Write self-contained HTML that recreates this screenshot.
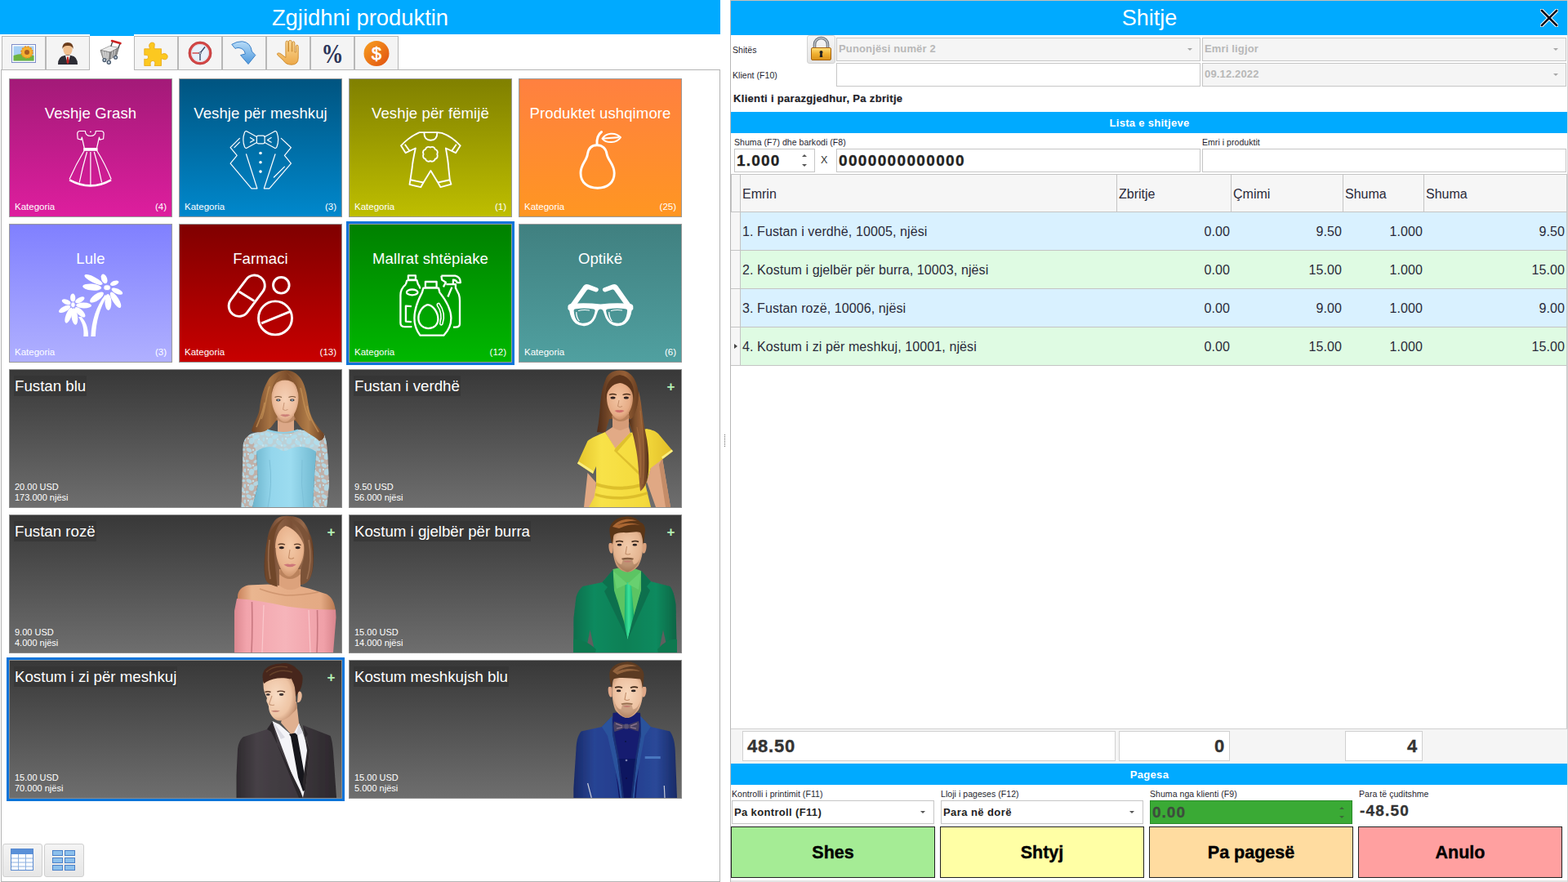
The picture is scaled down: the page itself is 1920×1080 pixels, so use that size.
<!DOCTYPE html>
<html lang="sq">
<head>
<meta charset="utf-8">
<title>Shitje</title>
<style>
*{box-sizing:border-box;margin:0;padding:0}
html,body{width:1920px;height:1080px;overflow:hidden;background:#fff}
body{position:relative;font-family:"Liberation Sans",sans-serif;font-size:11px;color:#222}
.abs{position:absolute}
/* ---------- left panel ---------- */
#lhead{left:0;top:0;width:882px;height:42px;background:#00aaff;color:#fff;text-align:center;font-size:27.4px;line-height:44px}
#lbox{left:1px;top:85px;width:881px;height:995px;border:1px solid #b4b4b4;background:#fff}
.tab{position:absolute;top:44px;width:54px;height:42px;border:1px solid #b8b8b8;background:#f4f4f4}
.tab.sel{top:42px;height:44px;width:54px;background:#fff;border:none;border-top:2px solid #00aaff}
.tab svg{position:absolute;left:10px;top:4px}
.cat{position:absolute;width:200px;height:170px;border:1px solid #9a9a9a;color:#fff}
.cat .t{position:absolute;left:0;right:0;top:31px;text-align:center;font-size:18.5px;letter-spacing:.12px;line-height:22px;white-space:nowrap}
.cat .k{position:absolute;left:6px;bottom:6px;font-size:11.5px;line-height:12px}
.cat .n{position:absolute;right:6px;bottom:6px;font-size:11.5px;line-height:12px}
.cat svg{position:absolute;left:60px;top:58px}
.prod{position:absolute;width:408px;height:170px;border:1px solid #8c8c8c;color:#fff;background:linear-gradient(#383838,#6e6e6e);overflow:hidden}
.prod .t{position:absolute;left:5px;top:7px;font-size:18.7px;line-height:25px;white-space:nowrap;background:rgba(50,50,50,.55);padding:0 1px}
.prod .p{position:absolute;left:6px;bottom:5px;font-size:11px;line-height:13px;white-space:nowrap}
.prod .plus{position:absolute;right:7.5px;top:11px;font-size:17px;line-height:20px;color:#b4f0b4;font-weight:bold}
.prod svg{position:absolute;right:0;top:0}
.selbox{position:absolute;border:3px solid #0a74da}
.vbtn{position:absolute;top:1033px;width:49px;height:41px;border:1px solid #cfcfcf;border-radius:3px;background:linear-gradient(#f4f4f4,#e6e6e6)}
/* ---------- right panel ---------- */
#rbox{left:894px;top:0;width:1026px;height:1080px;border-left:1px solid #b8b8b8;border-top:1px solid #c8c0b8}
#rhead{left:895px;top:1px;width:1025px;height:42px;background:#00aaff;color:#fff;text-align:center;font-size:27px;line-height:42px}
.lbl{position:absolute;font-size:10.5px;line-height:13px;white-space:nowrap;color:#1e1e2e;letter-spacing:.05px}
.inp{position:absolute;height:29px;border:1px solid #c6c6c6;background:#fff;white-space:nowrap;overflow:hidden}
.inp.dis{background:#f5f5f5;color:#b8b8b8;font-weight:bold;font-size:13px;letter-spacing:.15px;line-height:25px;padding-left:2px}
.arr{position:absolute;right:9px;top:12px;width:0;height:0;border-left:3.5px solid transparent;border-right:3.5px solid transparent;border-top:3.5px solid #a8a8a8}
.bar{position:absolute;left:895px;width:1025px;height:26px;background:#00aaff;color:#fff;font-weight:bold;font-size:13px;letter-spacing:.3px;line-height:28px;text-align:center}
.gh{position:absolute;top:213px;height:47px;background:#f6f6f6;border:1px solid #c4c4c4;border-left:none;font-size:16px;line-height:48px;padding-left:2px;color:#2a2a3a}
.row{position:absolute;left:895px;width:1023px;height:47px;border-bottom:1px solid #c4c4c4;font-size:16px;letter-spacing:.1px;line-height:48px;color:#2a2a3a}
.row .ind{position:absolute;left:0;top:0;width:12px;height:46px;background:#f6f6f6;border-right:1px solid #c4c4c4}
.row span{position:absolute;top:0;white-space:nowrap}
.row .r{text-align:right}
.blue{background:#d9f1ff}
.green{background:#dffbe3}
.tot{position:absolute;top:895px;height:37px;border:1px solid #d0d0d0;background:#fff;font-weight:bold;font-size:22px;letter-spacing:.8px;line-height:36px;color:#333;-webkit-text-stroke:.35px #333}
.big{position:absolute;top:1012px;width:250px;height:63px;border:1px solid #222;font-weight:bold;font-size:21.5px;line-height:62px;text-align:center;color:#000;-webkit-text-stroke:.4px #000}
</style>
</head>
<body>
<!-- LEFT -->
<div id="lhead" class="abs">Zgjidhni produktin</div>
<div id="lbox" class="abs"></div>
<!--TABS-->
<svg width="0" height="0" style="position:absolute"><defs><linearGradient id="dg" x1="0" y1="0" x2="1" y2="1"><stop offset="0" stop-color="#f8a020"/><stop offset="1" stop-color="#e05010"/></linearGradient></defs></svg>
<div class="tab" style="left:2px"><svg width="32" height="32" viewBox="0 0 32 32" style="top:4px"><rect x="1.500" y="5.500" width="29" height="22" fill="#fff" stroke="#7c8cc8"/><rect x="3.500" y="7.500" width="25" height="18" fill="#a8d0f4"/><path d="M3.500 19Q14 15 28.500 19V25.500H3.500Z" fill="#6cb440"/><circle cx="20" cy="15" r="7" fill="#f4b030"/><circle cx="20" cy="15" r="7" fill="none" stroke="#e89020" stroke-width="1.500" stroke-dasharray="2.200 1.500"/><circle cx="20" cy="15" r="3" fill="#a85c20"/></svg></div>
<div class="tab" style="left:56px"><svg width="32" height="32" viewBox="0 0 32 32" style="top:4px"><path d="M4 30Q4 20 12 19L16 18L20 19Q28 20 28 30Z" fill="#2c2c34"/><path d="M13 19L16 29L19 19Z" fill="#f4f4f4"/><path d="M15.2 20.500H16.8L17.6 27L16 29.5L14.4 27Z" fill="#c82020"/><ellipse cx="16" cy="11.5" rx="5.6" ry="7" fill="#f0c090"/><path d="M9.5 11Q9 3 16 3Q23 3 22.5 11Q21 6.5 16 7Q11 6.500 9.500 11Z" fill="#6a3c1c"/></svg></div>
<div class="tab sel" style="left:110px"><svg width="32" height="32" viewBox="0 0 32 32" style="top:4px"><path d="M3 13.500L14.400 8.300L25.500 10.300L15 16.100Z" fill="#ececec" stroke="#8a8a8a" stroke-width=".7"/><path d="M3 13.500L15 16.100L13.800 25.200L6 23.300Z" fill="#b4b4b4" stroke="#6c6c6c" stroke-width=".8"/><path d="M15 16.100L25.500 10.300L22.900 19.400L13.800 25.200Z" fill="#8e8e8e" stroke="#6c6c6c" stroke-width=".8"/><path d="M6 14.300L8 23.700M9 15L10.200 24.300M12 15.600L12.200 24.800M18 14.500L16.500 23.500M21 12.800L19.300 21.700" stroke="#e4e4e4" stroke-width=".8"/><path d="M17.800 3L15.800 8.800M26.800 5.800L25 10.500" stroke="#44464c" stroke-width="1.300"/><path d="M17 2.100L27.400 5.100" stroke="#cc2020" stroke-width="2.600" stroke-linecap="round"/><g fill="#c8d4e0" stroke="#46566a" stroke-width="1.300"><circle cx="7.900" cy="25.600" r="1.900"/><circle cx="13.300" cy="28.300" r="2.100"/><circle cx="21.600" cy="22.300" r="1.900"/></g></svg></div>
<div class="tab" style="left:164px"><svg width="32" height="32" viewBox="0 0 32 32" style="top:4px"><g transform="translate(16 17) scale(1.38) translate(-16.3 -16.5)"><path d="M6 12H11Q9 8 12 6.500Q15.500 6 15 9Q14.5 11 15 12H21V17Q25 15 26.500 18Q27 21.500 24 21.500Q22 21 21 20.500V27H15Q16.5 23 13.500 22.5Q10.500 23 11.5 27H6V21Q9 22 9.5 19.500Q9.500 17 6 17.5Z" fill="#fcc820" stroke="#e8a818" stroke-width=".6"/></g></svg></div>
<div class="tab" style="left:218px"><svg width="32" height="32" viewBox="0 0 32 32" style="top:4px"><circle cx="16" cy="16" r="12.500" fill="#fff" stroke="#d44848" stroke-width="3.200"/><circle cx="16" cy="16" r="10.500" fill="#e8f0fa" stroke="#c8ccd4" stroke-width=".6"/><circle cx="16" cy="16" r="14" fill="none" stroke="#b83030" stroke-width=".7"/><path d="M16 16L22 8.500M16 16V25" stroke="#3c4a68" stroke-width="1.400" fill="none"/><path d="M16 16H6.500" stroke="#d03030" stroke-width="1.300"/><circle cx="16" cy="16" r="1.300" fill="#fff" stroke="#3c4a68" stroke-width=".8"/></svg></div>
<div class="tab" style="left:272px"><svg width="32" height="32" viewBox="0 0 32 32" style="top:4px"><defs><linearGradient id="ag" x1="0" y1="0" x2="0" y2="1"><stop offset="0" stop-color="#b8dcf8"/><stop offset="1" stop-color="#4e98dc"/></linearGradient></defs><path d="M.8 5.400Q7 1.500 13.700 1.750Q24 3 25.400 14L29.800 18.500L21 29.500L11.500 18.500L17.400 17Q16 10 9 9.500Q6.500 9.500 5 10.500Z" fill="url(#ag)" stroke="#3a80c8" stroke-width="1" stroke-linejoin="round"/></svg></div>
<div class="tab" style="left:326px"><svg width="32" height="32" viewBox="0 0 32 32" style="top:4px"><defs><linearGradient id="hg" x1="0" y1="0" x2="0" y2="1"><stop offset="0" stop-color="#fcdc9c"/><stop offset="1" stop-color="#eca848"/></linearGradient></defs><path d="M12.900 17V3.500Q12.900 1 14.400 1Q15.900 1 15.900 3.500V14H16.500V2.500Q16.500 .3 18.300 .3Q20.200 .3 20.200 2.500V14H20.900V4Q20.900 1.750 22.400 1.750Q23.900 1.750 23.900 4V15H25.300V8.500Q25.300 6.100 26.800 6.100Q28.200 6.100 28.200 8.500V22Q28.200 30.200 20 30.200Q13 30.200 10 25L3 18.500Q1.500 16.500 3.500 16Q5.500 15.800 7 17L12.900 21.500Z" fill="url(#hg)" stroke="#cc8828" stroke-width=".9" stroke-linejoin="round"/></svg></div>
<div class="tab" style="left:380px"><svg width="32" height="32" viewBox="0 0 32 32" style="top:4px"><text x="16" y="27.500" font-family="Liberation Serif,serif" font-weight="bold" font-size="33" text-anchor="middle" fill="#2c3458" textLength="27" lengthAdjust="spacingAndGlyphs">%</text></svg></div>
<div class="tab" style="left:434px"><svg width="32" height="32" viewBox="0 0 32 32" style="top:4px"><circle cx="16" cy="16.500" r="15.500" fill="url(#dg)"/><text x="16" y="24" font-family="Liberation Sans,sans-serif" font-size="21.500" text-anchor="middle" fill="#fff" stroke="#fff" stroke-width=".7">$</text></svg></div>
<!--/TABS-->
<!--CATS-->
<div class="cat" style="left:11px;top:96px;background:linear-gradient(#a31a78,#de1e9e)"><div class="t">Veshje Grash</div><svg width="80" height="80" viewBox="0 0 80 80" style="overflow:visible"><g fill="none" stroke="#fff" stroke-width="1.200" stroke-linejoin="round"><path d="M32.400 5.500H26Q22.700 5.500 22.700 9L23.200 15L27.600 16.200L28.300 13L31.300 26.500H46.500L49.500 13L50.200 16.200L54.600 15L55.100 9Q55.100 5.500 51.800 5.500H45.300Q45.300 11.500 38.900 11.500Q32.400 11.500 32.400 5.500Z"/><rect x="30.800" y="26.500" width="16.200" height="2.700" fill="#fff"/><path d="M31.300 29.200Q21 46 13 64.500M46.500 29.200Q57 46 64.200 64.500M34.500 31Q29 50 25.200 68.500M38.900 31V71M43.300 31Q49 50 52.600 68.500"/><path d="M13.200 65.300Q38.900 79.500 64 65.300" stroke-width="2.600"/><circle cx="38.900" cy="6.300" r=".9" fill="#fff" stroke="none"/></g></svg><div class="k">Kategoria</div><div class="n">(4)</div></div>
<div class="cat" style="left:219px;top:96px;background:linear-gradient(#005480,#0088cc)"><div class="t">Veshje për meshkuj</div><svg width="80" height="80" viewBox="0 0 80 80" style="overflow:visible"><g fill="none" stroke="#fff" stroke-width="1.200" stroke-linejoin="round" stroke-linecap="round"><rect x="34.400" y="11.200" width="9.700" height="9.600" rx="1.800"/><path d="M34.400 12.500L22.500 5.900Q20.300 5 19.500 7.200Q16.200 16 19.500 24.800Q20.300 27 22.500 26.100L34.400 19.500M44.100 12.500L56 5.900Q58.200 5 59 7.200Q62.300 16 59 24.800Q58.200 27 56 26.100L44.100 19.500M26.400 13.600L31.200 16.400L26.400 19.200M52.200 13.600L47.400 16.400L52.200 19.200"/><path d="M13.400 14.400L2.100 25.700L10.200 35.400L2.100 45.100L28 75.800H34.900L21.500 33.800M7 25.700L13.400 19.200"/><path d="M64.300 14.400L76.400 25.700L68.400 35.400L76.400 45.100L49.800 75.800H43.300L57 33.800M55.400 62L68.400 49.100"/><g fill="#fff" stroke="none"><circle cx="39" cy="32.500" r="1.800"/><circle cx="39" cy="43.800" r="1.800"/><circle cx="39" cy="55.100" r="1.800"/></g></g></svg><div class="k">Kategoria</div><div class="n">(3)</div></div>
<div class="cat" style="left:427px;top:96px;background:linear-gradient(#808000,#bebe00)"><div class="t">Veshje për fëmijë</div><svg width="80" height="80" viewBox="0 0 80 80" style="overflow:visible"><g fill="none" stroke="#fff" stroke-width="1.900" stroke-linejoin="round"><path d="M31.300 7.100H25.600Q14 12 3 23.300L8.700 32.200L20.800 26.500Q17 44 16.700 50L14.300 66.100L13.500 70.900L27.200 74.200L30.500 68.500L39.400 54L48.200 68.500L51.500 74.200L64.400 70.600L62.800 65.300L61.200 50Q61 44 57.900 26.500L70 32.200L75.700 23.300Q65 12 53.100 7.900L47.400 7.100Z"/><path d="M31.300 7.100Q31.300 16.800 39.400 16.800Q47.400 16.800 47.400 7.100M7.800 21.700L13.500 29.700M70.800 21.700L65.200 29.700M14.800 65.300L30.500 68.500M62.800 65.300L48.200 68.500"/><path d="M38.9 25.5A3.9 3.9 0 0 1 44.8 27.9A3.9 3.9 0 0 1 47.2 33.8A3.9 3.9 0 0 1 44.8 39.7A3.9 3.9 0 0 1 38.9 42.1A3.9 3.9 0 0 1 33.0 39.7A3.9 3.9 0 0 1 30.6 33.8A3.9 3.9 0 0 1 33.0 27.9A3.9 3.9 0 0 1 38.9 25.5Z"/></g></svg><div class="k">Kategoria</div><div class="n">(1)</div></div>
<div class="cat" style="left:635px;top:96px;background:linear-gradient(#ff8040,#ff9622)"><div class="t">Produktet ushqimore</div><svg width="80" height="80" viewBox="0 0 80 80" style="overflow:visible"><g fill="none" stroke="#fff" stroke-width="2.900" stroke-linejoin="round" stroke-linecap="round"><path d="M35 22.700C28.500 22.700 24.500 27 23.500 33.500C22.500 42 15 46 15 57C15 68.500 23.500 75.300 35.700 75.300C48 75.300 56.200 68.500 56.200 57C56.200 46 48.500 42 47 33.500C46 27 41.500 22.700 35 22.700Z"/><path d="M35 22C34.500 15 36.500 9.500 40.600 6.500"/><path d="M41.500 14.800C45.500 8 57 6 64 13.200C59 20.500 47 21 41.500 14.800ZM43.500 14.500L61 13.300" stroke-width="2"/></g></svg><div class="k">Kategoria</div><div class="n">(25)</div></div>
<div class="cat" style="left:11px;top:274px;background:linear-gradient(#8080ff,#b0b0ff)"><div class="t">Lule</div><svg width="80" height="80" viewBox="0 0 80 80" style="overflow:visible"><g fill="#fff" stroke="none"><ellipse cx="42.5" cy="9.5" rx="12.3" ry="3.5" transform="rotate(-153 42.5 9.5)"/><ellipse cx="55.6" cy="8.4" rx="6.1" ry="3.5" transform="rotate(-111 55.6 8.4)"/><ellipse cx="68.2" cy="13.7" rx="5.5" ry="2.8" transform="rotate(-22 68.2 13.7)"/><ellipse cx="71.4" cy="23.6" rx="7.4" ry="3.1" transform="rotate(25 71.4 23.6)"/><ellipse cx="69.6" cy="34.3" rx="11.2" ry="3.8" transform="rotate(58 69.6 34.3)"/><ellipse cx="60.4" cy="37.0" rx="10.0" ry="4.0" transform="rotate(88 60.4 37.0)"/><ellipse cx="46.5" cy="31.0" rx="9.9" ry="4.0" transform="rotate(145 46.5 31.0)"/><ellipse cx="40.7" cy="18.6" rx="11.6" ry="4.0" transform="rotate(-175 40.7 18.6)"/><ellipse cx="59.1" cy="19.2" rx="4.2" ry="3.400" stroke="#9a9aff" stroke-width=".8"/><ellipse cx="17.2" cy="31.6" rx="5.1" ry="3.1" transform="rotate(-92 17.2 31.6)"/><ellipse cx="25.8" cy="34.3" rx="6.3" ry="3.0" transform="rotate(-29 25.8 34.3)"/><ellipse cx="30.6" cy="41.0" rx="9.5" ry="3.5" transform="rotate(1 30.6 41.0)"/><ellipse cx="26.0" cy="49.3" rx="8.3" ry="3.5" transform="rotate(44 26.0 49.3)"/><ellipse cx="19.3" cy="54.5" rx="10.3" ry="3.8" transform="rotate(83 19.3 54.5)"/><ellipse cx="12.2" cy="53.2" rx="10.0" ry="3.5" transform="rotate(111 12.2 53.2)"/><ellipse cx="7.1" cy="45.4" rx="7.9" ry="3.2" transform="rotate(153 7.1 45.4)"/><ellipse cx="9.2" cy="36.7" rx="5.8" ry="3.0" transform="rotate(-157 9.2 36.7)"/><ellipse cx="17.4" cy="40.2" rx="2.800" ry="3.400" stroke="#9a9aff" stroke-width=".8"/><path d="M56.7 28.1C46.2 41.8 40.0 59.6 39.4 79.0H44.9C45.5 61.2 50.2 43.5 59.1 29.7Z"/><path d="M23.9 55.1C29.7 62.9 31.0 70.9 30.3 79.0H36.1C36.1 69.3 33.6 61.2 27.7 55.1Z"/></g></svg><div class="k">Kategoria</div><div class="n">(3)</div></div>
<div class="cat" style="left:219px;top:274px;background:linear-gradient(#800000,#c80000)"><div class="t">Farmaci</div><svg width="80" height="80" viewBox="0 0 80 80" style="overflow:visible"><g fill="none" stroke="#fff" stroke-width="2.900"><rect x="9.600" y=".9" width="25.200" height="56.600" rx="12.600" transform="rotate(37 22.200 29.200)"/><path d="M12.600 24L31.200 35.400"/><circle cx="64.300" cy="16.300" r="9.800"/><circle cx="57" cy="56.400" r="20.500"/><path d="M40.100 62.900L75.600 48.300"/></g></svg><div class="k">Kategoria</div><div class="n">(13)</div></div>
<div class="cat" style="left:427px;top:274px;background:linear-gradient(#008000,#00b800)"><div class="t">Mallrat shtëpiake</div><svg width="80" height="80" viewBox="0 0 80 80" style="overflow:visible"><g transform="translate(-1.600 -1.400)" fill="none" stroke="#fff" stroke-width="2.300" stroke-linejoin="round"><path d="M13.500 5.800H22.500V11H13.500ZM12 11.500H24L25.500 16.500Q28 19.500 28 22M10.500 16.500Q4 22 4 30V64Q4 68.500 9 68.500H18M12 11.500L10.500 16.500M17.500 43.500L10.500 43V62L17.500 62.500"/><ellipse cx="18.300" cy="26.300" rx="6.800" ry="3.400"/><path d="M34.500 13.400H48.200V20.500H34.500ZM32 21H50.600L52 26.500Q66 44 66 58Q66 70 57 79H28Q21 70 21 58Q21 44 30.500 26.500Z"/><path d="M37 41.500C30 44 25.500 52 26 59C26.500 66 32 70.500 38 70.500C45 70.500 50 66 50 59C50 51 44 42 37 41.500Z"/><path d="M51.500 40Q60 52 55.500 65Q54.500 67 53 66Q52 65 52.500 63.500Q56 52 49 42.500Q48.500 40.500 50 40Q51 39.500 51.500 40Z" stroke-width="1.600"/><path d="M54 6.100H71Q77.500 7.500 77.500 14.500H73.500Q72 11 68.500 11V16.500M54 6.100L54.700 11L59.500 14.200L56.500 19.800M60 16.500H71.500V21L75.500 29Q76.600 32 76.600 37V65Q76.600 69.100 71 69.100H68.500M67 20L62 31.900"/></g></svg><div class="k">Kategoria</div><div class="n">(12)</div></div>
<div class="cat" style="left:635px;top:274px;background:linear-gradient(#408080,#50a0a0)"><div class="t">Optikë</div><svg width="80" height="80" viewBox="0 0 80 80" style="overflow:visible"><g fill="#fff" stroke="none"><path d="M2.600 39.400L18.500 17Q21 14 25 15.500L35.500 19.500Q37.500 20.500 36.500 22.800Q35.500 25 33.500 24.500L25 21.500Q23.500 21 22.500 22.500L10.700 39ZM76.100 39.400L60.200 17Q57.700 14 53.700 15.500L43.200 19.500Q41.200 20.500 42.200 22.800Q43.200 25 45.200 24.500L53.700 21.500Q55.200 21 56.200 22.500L68 39Z"/><path fill-rule="evenodd" d="M-.6 42.500Q-.6 39.500 3 39Q21 37.500 39.400 39.500Q58 37.500 75.800 39Q79.300 39.500 79.300 42.500V45.500L77.500 47.500Q76 58 70 63Q65 66.500 59 66.200Q50 65.500 45.500 56Q43.500 50 42.500 47.500Q41.500 45.500 39.400 45.500Q37.300 45.500 36.300 47.500Q35.300 50 33.300 56Q28.800 65.500 19.800 66.200Q13.800 66.500 8.800 63Q2.800 58 1.200 47.500L-.6 45.500ZM6.600 47Q6.500 45.500 9 45.200Q20 43.800 31 45.500Q33 46 32.600 48Q31.500 55 27.500 59.500Q23 63 17 62.800Q10 62 8 55Q6.800 51 6.600 47ZM72.100 47Q72.200 45.500 69.700 45.200Q58.700 43.800 47.700 45.500Q45.700 46 46.100 48Q47.200 55 51.200 59.500Q55.700 63 61.700 62.800Q68.700 62 70.700 55Q71.900 51 72.100 47Z"/><path d="M10.300 49Q10.500 56 14 60L12.800 60.200Q8.800 56 9.200 49ZM50.300 49Q50.500 56 54 60L52.800 60.200Q48.800 56 49.200 49ZM12 47.900Q19 46.200 26 47.400L26 46.500Q19 45.300 12 46.900ZM52 47.900Q59 46.200 66 47.400L66 46.500Q59 45.300 52 46.900Z"/></g></svg><div class="k">Kategoria</div><div class="n">(6)</div></div>
<div class="selbox" style="left:424px;top:271px;width:206px;height:176px"></div>
<!--/CATS-->
<!--PRODS-->
<div class="prod" style="left:11px;top:452px"><svg width="140" height="168" viewBox="0 0 140 168"><defs>
<linearGradient id="h1" x1="0" y1="0" x2="1" y2="0"><stop offset="0" stop-color="#6e4426"/><stop offset=".25" stop-color="#a87444"/><stop offset=".5" stop-color="#7a4c2a"/><stop offset=".78" stop-color="#b07c48"/><stop offset="1" stop-color="#6a4024"/></linearGradient>
<radialGradient id="s1" cx=".5" cy=".45" r=".6"><stop offset="0" stop-color="#f6d2b8"/><stop offset=".7" stop-color="#ecbc9c"/><stop offset="1" stop-color="#c8906c"/></radialGradient>
<linearGradient id="d1" x1="0" y1="0" x2="1" y2="0"><stop offset="0" stop-color="#6cb4cc"/><stop offset=".3" stop-color="#94d6ec"/><stop offset=".6" stop-color="#9cdcf0"/><stop offset="1" stop-color="#70b8d0"/></linearGradient>
<pattern id="lace" width="23" height="19" patternUnits="userSpaceOnUse"><g fill="#b0e0f0"><ellipse cx="4" cy="3" rx="3.600" ry="2.200" transform="rotate(30 4 3)"/><ellipse cx="13" cy="6" rx="4" ry="2.400" transform="rotate(-25 13 6)"/><ellipse cx="20" cy="2.500" rx="2.400" ry="1.600"/><ellipse cx="7" cy="11" rx="3.200" ry="4" transform="rotate(15 7 11)"/><ellipse cx="17.500" cy="13" rx="3.800" ry="2.600" transform="rotate(40 17.500 13)"/><ellipse cx="1.500" cy="16.500" rx="2.200" ry="1.800"/><ellipse cx="12" cy="17" rx="2.800" ry="1.700" transform="rotate(-30 12 17)"/><ellipse cx="22" cy="9" rx="1.600" ry="2.400"/></g><g fill="#c8ecf8"><circle cx="9" cy="3" r="1.200"/><circle cx="16" cy="9" r="1.100"/><circle cx="3" cy="8" r="1.200"/><circle cx="21" cy="16.500" r="1.300"/></g></pattern>
<filter id="soft" x="-5%" y="-5%" width="110%" height="110%"><feGaussianBlur stdDeviation=".55"/></filter></defs>
<g filter="url(#soft)">
<path d="M30 78C22 82 19.500 88 19.500 96L18.500 140L17.500 168H31L38 140L36 100L40 86ZM118 78C122 84 123 96 123.500 109L125 140L122 168H105L107 130L109 100L104 84Z" fill="#c0b0a8"/>
<path d="M30 78C22 82 19.500 88 19.500 96L18.500 140L17.500 168H31L38 140L36 100L40 86ZM118 78C122 84 123 96 123.500 109L125 140L122 168H105L107 130L109 100L104 84Z" fill="url(#lace)" opacity=".8"/>
<path d="M30 78L49 73Q70 80 87 73L118 78L109 102H36Z" fill="#bcd0d6"/>
<path d="M30 78L49 73Q70 80 87 73L118 78L109 102H36Z" fill="url(#lace)" opacity=".8"/>
<path d="M36 100C44 93 56 92 64 97C68 100 72 100 76 97C86 92 100 93 109 100L107 130L105 168H31L38 140Z" fill="url(#d1)"/>
<path d="M52 110Q56 140 50 168M92 110Q90 140 94 168" stroke="#7cc0d8" stroke-width="1" fill="none"/>
<path d="M71 .5C60 1 52 8 49 15C44 24 41 36 40 46C39 56 34 62 31 71C29 75 31 77 34 76C40 77 48 76 54 70L60 62H84L90 70C98 78 106 80 113 87C118 86 120 82 118.500 78C113 72 106 64 103 56C99 46 99 34 96 24C93 10 84 0 71 .5Z" fill="url(#h1)"/>
<path d="M52 20C47 34 47 50 42 60M90 22C94 36 94 50 102 62M46 40C44 52 40 60 36 70M98 44C100 56 106 66 112 76" stroke="#c89458" stroke-width="1.600" fill="none" opacity=".7"/>
<path d="M62 52H82V77Q72 80 62 77Z" fill="#dca888"/>
<path d="M60 60Q72 70 84 60L82 56H62Z" fill="#b88462" opacity=".8"/>
<path d="M49 73.500Q70 80.500 87 73.500" stroke="#8ecfe6" stroke-width="2.200" fill="none"/>
<path d="M54.500 34C54.500 20 60 12.500 71 12.500C82 12.500 87.500 20 87.500 34C87.500 46 82 57 75.500 62C72.500 64.200 69.500 64.200 66.500 62C60 57 54.500 46 54.500 34Z" fill="url(#s1)"/>
<path d="M71 2C64 8 57 16 54.500 30C54 20 60 8 71 2ZM71 2C78 8 85 16 87.500 30C88.500 18 82 8 71 2Z" fill="#8a5a34"/>
<path d="M58.500 33.500Q62.500 31.500 67 33.500M75.500 33.500Q80 31.500 84 33.500" stroke="#7a5436" stroke-width="1.100" fill="none"/>
<ellipse cx="62.800" cy="37" rx="2.800" ry="1.400" fill="#4a4448"/><ellipse cx="79.800" cy="37" rx="2.800" ry="1.400" fill="#4a4448"/>
<circle cx="62.800" cy="37" r=".9" fill="#88b0c8"/><circle cx="79.800" cy="37" r=".9" fill="#88b0c8"/>
<path d="M70 40L68.500 48.500Q71.500 50.500 74.500 48.500" stroke="#c89474" stroke-width="1" fill="none"/>
<path d="M65 55.300Q68.500 53.600 71.300 54.600Q74 53.600 77.500 55.300Q71.300 59.500 65 55.300Z" fill="#cc8078"/>
</g></svg><div class="t">Fustan blu</div><div class="p">20.00 USD<br>173.000 njësi</div></div>
<div class="prod" style="left:427px;top:452px"><svg width="140" height="168" viewBox="0 0 140 168"><defs>
<linearGradient id="h2" x1="0" y1="0" x2="1" y2="0"><stop offset="0" stop-color="#4e2c18"/><stop offset=".3" stop-color="#7c4e2c"/><stop offset=".6" stop-color="#965f36"/><stop offset="1" stop-color="#56321a"/></linearGradient>
<radialGradient id="s2" cx=".45" cy=".45" r=".62"><stop offset="0" stop-color="#f2c4a2"/><stop offset=".7" stop-color="#e6ac86"/><stop offset="1" stop-color="#bf8258"/></radialGradient>
<linearGradient id="d2" x1="0" y1="0" x2="1" y2="0"><stop offset="0" stop-color="#e4c42c"/><stop offset=".25" stop-color="#f8e248"/><stop offset=".7" stop-color="#f4da3c"/><stop offset="1" stop-color="#e0bc28"/></linearGradient></defs>
<g filter="url(#soft)">
<path d="M65 .5C55 .5 49 6 47.500 12C43 22 42 32 41 42C40 56 39 66 37 76L47 77L52 60H80L82 66L92 72C94 92 96 120 92 147L89 148C90 120 86 92 76 64L92 60C92 46 90 36 88 28C86 14 80 .5 65 .5Z" fill="url(#h2)"/>
<path d="M25.500 126L21 168H33.500L36 138ZM117 108L127 168H109L98 137L103 119Z" fill="#e0a884"/>
<path d="M117 108L127 168H121L113 116Z" fill="#c48c68"/>
<path d="M56 52H76V82H56Z" fill="#d69c78"/>
<path d="M47 76L56 70Q62 74 66 74L76 70L78 77L60 98Z" fill="#e2aa86"/>
<path d="M55 58Q66 68 77 58L76 54H56Z" fill="#b47c56" opacity=".85"/>
<path d="M47 76C38 80 30 83 25.500 87L13 114.500L32 127L36 118L36 141L33.500 156L27 168H103L96.500 141L103 120L117.500 109L130 99.500L112 78C108 74 102 73 98 72L77.500 77L59.500 96Z" fill="url(#d2)"/>
<path d="M59.500 96L77.500 77L80 79L62 100L96.500 132L96 136L58 99Z" fill="#d8b828" opacity=".8"/>
<path d="M36 138Q66 148 97 137L97 141Q66 152 36 142ZM35 151Q66 160 99 149L99.500 152Q66 164 34.500 154Z" fill="#d4b424" opacity=".75"/>
<path d="M13 114.500L32 127L33 124L14.500 112ZM117.500 109L130 99.500L128.500 97.500L116 106.500Z" fill="#fbee80"/>
<path d="M88 26C92 40 92 56 96.500 77C100 92 101 110 100 125C99 136 96 144 90 148.500C88 130 88 110 84 93C82 80 78 70 76 62C84 58 88 44 88 26Z" fill="url(#h2)"/>
<path d="M90 50C94 80 96 110 93 140M86 70C90 90 91 110 90 132" stroke="#a87040" stroke-width="1.200" fill="none" opacity=".7"/>
<path d="M49 34C49 21 54 15.500 65 15.500C76 15.500 81 21 81 34C81 45 76 54.500 70 59C66.500 61.500 63.500 61.500 60 59C54 54.500 49 45 49 34Z" fill="url(#s2)"/>
<path d="M47.500 36C46 20 52 8 65 6C78 8 84 20 82 36C81 24 74 17 65 16C56 17 49 24 47.500 36Z" fill="#5c361c"/>
<path d="M52 30.500Q56 28.500 61 30.500M68.500 30.500Q73.500 28.500 78 30.500" stroke="#4a2c18" stroke-width="1.300" fill="none"/>
<ellipse cx="56.500" cy="34" rx="3" ry="1.500" fill="#2e2220"/><ellipse cx="72.800" cy="34" rx="3" ry="1.500" fill="#2e2220"/>
<path d="M64 37L62.500 44.500Q65 46.500 68 44.500" stroke="#c28c68" stroke-width="1" fill="none"/>
<path d="M58.500 50Q62 48.300 64.600 49.300Q67 48.300 70.500 50Q64.600 54.500 58.500 50Z" fill="#d0706c"/>
</g></svg><div class="t">Fustan i verdhë</div><div class="plus">+</div><div class="p">9.50 USD<br>56.000 njësi</div></div>
<div class="prod" style="left:11px;top:630px"><svg width="140" height="168" viewBox="0 0 140 168"><defs>
<linearGradient id="h3" x1="0" y1="0" x2="1" y2="0"><stop offset="0" stop-color="#5e3a24"/><stop offset=".3" stop-color="#8c6044"/><stop offset=".55" stop-color="#7a5036"/><stop offset=".8" stop-color="#966a4c"/><stop offset="1" stop-color="#60391f"/></linearGradient>
<radialGradient id="s3" cx=".5" cy=".4" r=".65"><stop offset="0" stop-color="#f4caa8"/><stop offset=".7" stop-color="#e8b28c"/><stop offset="1" stop-color="#c48a62"/></radialGradient>
<linearGradient id="k3" x1="0" y1="0" x2="1" y2="0"><stop offset="0" stop-color="#c88058"/><stop offset=".15" stop-color="#eab690"/><stop offset=".5" stop-color="#e6ae88"/><stop offset=".85" stop-color="#e4aa84"/><stop offset="1" stop-color="#b87850"/></linearGradient>
<linearGradient id="d3" x1="0" y1="0" x2="1" y2="0"><stop offset="0" stop-color="#dc8890"/><stop offset=".12" stop-color="#f2a4ac"/><stop offset=".5" stop-color="#f6b4ba"/><stop offset=".88" stop-color="#f0a0a8"/><stop offset="1" stop-color="#d8848c"/></linearGradient></defs>
<g filter="url(#soft)">
<path d="M73 .8C64 .8 60 4 57 8.500C52 16 50 24 49 31C47 42 45.500 52 45.500 62C45.500 70 46 76 48 80L62 87L90 85C96 84 100 81 102 76C106 68 106 58 106 46C106 36 104 28 101 22C98 12 92 5 88 3.500C84 1.500 78 .8 73 .8Z" fill="url(#h3)"/>
<path d="M64 66H90V96H64Z" fill="#dca27c"/>
<path d="M64 72Q77 84 90 72L89 66H65Z" fill="#b47c56" opacity=".85"/>
<path d="M13 100C13 92 18 87.500 26 85.500L50 84.500L64 86Q77 96 90 87L100 89.500L122 96.500C128 100 131 106 132 112L133 118H12Z" fill="url(#k3)"/>
<path d="M40 90Q56 96 72 98Q92 98 112 94" stroke="#c48a64" stroke-width="1.400" fill="none" opacity=".7"/>
<path d="M12 102Q40 104 73 111.500Q104 116 133 115.500L133.500 125L130 168H9L9 117Z" fill="url(#d3)"/>
<path d="M30.500 106C31 126 31 148 30 168M110.500 116C111 136 111 150 110 168" stroke="#c87880" stroke-width="1.600" fill="none"/>
<path d="M45 110L43 168M100 116L102 168" stroke="#fac8cc" stroke-width="1.200" fill="none"/>
<path d="M59 40C59 26 64 17 71.500 13C80 15 90 24 94 36C95 46 93 54 90 60C86 68 82 73 78.500 74.500C76 75.500 74 75 72 73.500C66 69 59.500 54 59.500 40Z" fill="url(#s3)"/>
<path d="M71.300 3C64 8 58 18 57.500 32C57 46 58.500 60 60 72C60.500 80 61 85 62 87.500C56 86 50 84 48 80C46 72 46 60 47 48C48 30 54 10 71.300 3Z" fill="#70462c"/>
<path d="M71.300 3C80 6 90 16 94 30C96 42 95 52 91.500 62C90 70 89.500 78 90 85C96 84 100 81 102 76C106 66 106 52 104 40C102 22 90 4 71.300 3Z" fill="#7c5238"/>
<path d="M52 30C50 46 50 62 53 78M100 30C103 46 103 62 98 78" stroke="#a87c5c" stroke-width="1.600" fill="none" opacity=".7"/>
<path d="M62.500 36Q66.500 34 71 36M82 36Q86.500 34 90.500 36.500" stroke="#5a3a26" stroke-width="1.300" fill="none"/>
<ellipse cx="66.800" cy="39.600" rx="3" ry="1.600" fill="#2c2224"/><ellipse cx="86.600" cy="39.600" rx="3" ry="1.600" fill="#2c2224"/>
<path d="M77 42L75.500 52Q78.500 54.500 82 52" stroke="#c48c66" stroke-width="1.100" fill="none"/>
<path d="M69.500 60.500Q74 59 77 60Q80 59 84.800 60.500Q77 66 69.500 60.500Z" fill="#cc7478"/>
</g></svg><div class="t">Fustan rozë</div><div class="plus">+</div><div class="p">9.00 USD<br>4.000 njësi</div></div>
<div class="prod" style="left:427px;top:630px"><svg width="140" height="168" viewBox="0 0 140 168"><defs>
<radialGradient id="s4" cx=".5" cy=".42" r=".62"><stop offset="0" stop-color="#f2ccac"/><stop offset=".7" stop-color="#e4b490"/><stop offset="1" stop-color="#b88460"/></radialGradient>
<linearGradient id="j4" x1="0" y1="0" x2="1" y2="0"><stop offset="0" stop-color="#0a6e4c"/><stop offset=".2" stop-color="#0e8a5e"/><stop offset=".5" stop-color="#0c8056"/><stop offset=".8" stop-color="#0e8a5e"/><stop offset="1" stop-color="#086444"/></linearGradient>
<linearGradient id="t4" x1="0" y1="0" x2="1" y2="0"><stop offset="0" stop-color="#14a868"/><stop offset=".45" stop-color="#3ce49c"/><stop offset="1" stop-color="#12a060"/></linearGradient></defs>
<g filter="url(#soft)">
<path d="M56.500 66L74.500 62L91 68L94 100L78 152H70L54 100Z" fill="#5cc464"/>
<path d="M60 72L64 130L72 150L62 100Z" fill="#4aa850" opacity=".6"/>
<path d="M71.500 84L74.500 82L79 84.500L82.500 126L74.500 152L70.500 141L71 110Z" fill="url(#t4)"/>
<path d="M56.500 68L61 90L74.500 84L56.500 68ZM91 69L88 91L74.500 84Z" fill="#68d070"/>
<path d="M52.500 34C51 34 51 40 52.500 44C53.500 47 55 47 56 46L56 34ZM96.500 34C98 34 98 40 96.500 44C95.500 47 94 47 93 46L93 34Z" fill="#d8a07c"/>
<path d="M56 36C56 26 58 20 62 18L88 17C92 20 93.500 26 93.500 36C93.500 46 91 56 87.500 62C82 68 78 69.500 74.500 69.500C71 69.500 66 68 61 62C58 56 56 46 56 36Z" fill="url(#s4)"/>
<path d="M58 48C60 58 64 66 74.500 69.500C85 66 89 58 91.500 48C90 56 86 60 82 60L80 54Q74.500 52 69 54L67 60C63 60 60 56 58 48Z" fill="#6a4830" opacity=".32"/>
<path d="M52.500 16C54 8 62 2 72.500 1.400C80 1 86 4 90 8.500C95 10 97 16 95.500 22C95 28 94.500 32 93.500 36C93 28 92 24 90 21C84 19 78 22 70 21C64 21 60 22 57.500 24C56.500 28 56.500 32 56 36C54 30 52 22 52.500 16Z" fill="#5a3418"/>
<path d="M56 14C62 6 74 2 86 7C78 6 70 8 62 12C68 10 80 8 90 12C82 10 72 12 64 16Z" fill="#b87038" opacity=".85"/>
<path d="M60 32.500Q64.500 30.500 69 32.500M79.500 32.500Q84 30.500 88 32.500" stroke="#3e2616" stroke-width="1.700" fill="none"/>
<ellipse cx="64.500" cy="36.200" rx="2.800" ry="1.400" fill="#2a2020"/><ellipse cx="83.300" cy="36.200" rx="2.800" ry="1.400" fill="#2a2020"/>
<path d="M73.500 38L72 47Q74.500 49 78 47" stroke="#c08c68" stroke-width="1.100" fill="none"/>
<path d="M67 52.800Q74.500 50.500 82 52.800L81 54.500Q74.500 53 68 54.500Z" fill="#6a4428" opacity=".8"/>
<path d="M69 56Q74.500 55 80 56Q74.500 59 69 56Z" fill="#c47c70"/>
<path d="M56.500 67L43.500 82L19.500 87C14 92 11.500 98 11 104L8.500 125L8 168H135L134.500 156L133.500 109C132 98 130 92 126.500 87L103 81L91 68L92 90L74.500 152.500L56 90Z" fill="url(#j4)"/>
<path d="M56.500 67L43.500 82L50 88L46 93L74.500 152.500L70 130L58 92ZM91 68L103 81L98 87L102 92L74.500 152.500L80 130L91 92Z" fill="#09704e"/>
<path d="M28.500 140L33.500 163L25 158ZM118 140L113.500 163L122 158Z" fill="#5e5e5e"/>
<path d="M8 152Q20 150 36 164L35 168H8ZM135 152Q124 150 111 164L112 168H135Z" fill="#0a7850"/>
</g></svg><div class="t">Kostum i gjelbër për burra</div><div class="plus">+</div><div class="p">15.00 USD<br>14.000 njësi</div></div>
<div class="prod" style="left:11px;top:808px"><svg width="140" height="168" viewBox="0 0 140 168"><defs>
<radialGradient id="s5" cx=".4" cy=".45" r=".65"><stop offset="0" stop-color="#f8dcc4"/><stop offset=".7" stop-color="#eec4a4"/><stop offset="1" stop-color="#c49070"/></radialGradient>
<linearGradient id="j5" x1="0" y1="0" x2="1" y2="0"><stop offset="0" stop-color="#2e2a2e"/><stop offset=".2" stop-color="#464046"/><stop offset=".6" stop-color="#3e383e"/><stop offset="1" stop-color="#2c282c"/></linearGradient></defs>
<g filter="url(#soft)">
<path d="M70 58L85 50L88 76L92 88L80 92L66 76Z" fill="#e0b090"/>
<path d="M70 62Q78 70 86 58L85 52L70 58Z" fill="#b88868" opacity=".8"/>
<path d="M87 38C90 36 92.500 40 91.500 45C90.500 50 88 52 86 51Z" fill="#e8b898"/>
<path d="M44.500 30C44 24 46 22 48 20L78 18C82 24 84 34 84 42C85 50 84 58 82 62C78 68 72 72 66 73.500C62 74 58 72 55 68C52 64 51 60 51 56L49.500 52C48 50 48 48 49 46C46 40 44.500 36 44.500 30Z" fill="url(#s5)"/>
<path d="M43.500 18C44 10 52 4 65 3.700C72 2 80 4 85.500 10C90 13 93 18 92.600 22C92.500 28 91 32 90 35C88 38 86 40 84 44C84 36 83 30 80.500 26C79 22 78 21 77.600 22.600C68 20 56 21 48 26C46.500 27 45.500 28 45.300 28C44 26 43.500 22 43.500 18Z" fill="#46281a"/>
<path d="M48 14C54 8 64 6 74 8M52 18C60 12 70 11 80 14" stroke="#6e4630" stroke-width="1.400" fill="none" opacity=".8"/>
<path d="M46.500 38.500Q50 37 53.500 38.500M61.500 38Q66 36 71 38.500" stroke="#5a3826" stroke-width="1.400" fill="none"/>
<ellipse cx="50.200" cy="41.500" rx="2.400" ry="1.300" fill="#3a3030"/><ellipse cx="66.600" cy="41.500" rx="2.800" ry="1.400" fill="#3a3030"/>
<path d="M55 43L51.500 53Q54 55.500 58 54" stroke="#c89878" stroke-width="1.100" fill="none"/>
<path d="M54 61.500Q59 60 65 61.500Q59 64.500 54 61.500Z" fill="#c88878"/>
<path d="M55.500 74L64 78L80 92L88 77L92.500 87L100 110L96.500 148L93 168L88 168L62 104Z" fill="#f4f4f8"/>
<path d="M55.500 74L71 94L66 96ZM88 77L93 88L84 93Z" fill="#dcdce4"/>
<path d="M76 90L83.500 88.500L86 91L95 140L96.500 158L93 160L87 143L78 93Z" fill="#18181c"/>
<path d="M55.500 74.500L49 84L19.500 93.500C15 98 13.500 104 13 109L11.500 140L11.500 168H134L131 125C130 108 129 98 126.500 92L93 79L101 109L97 150L93 168H90Z" fill="url(#j5)"/>
<path d="M55.500 74.500L49 84L54 87L90 160L93 168H88L62 104ZM93 79L99 90L96 94L101 109L97 150L95 160L92.500 150L98 110Z" fill="#2a262a"/>
</g></svg><div class="t">Kostum i zi për meshkuj</div><div class="plus">+</div><div class="p">15.00 USD<br>70.000 njësi</div></div>
<div class="prod" style="left:427px;top:808px"><svg width="140" height="168" viewBox="0 0 140 168"><defs>
<radialGradient id="s6" cx=".5" cy=".42" r=".62"><stop offset="0" stop-color="#f8d8bc"/><stop offset=".7" stop-color="#ecc0a0"/><stop offset="1" stop-color="#c08c68"/></radialGradient>
<linearGradient id="j6" x1="0" y1="0" x2="1" y2="0"><stop offset="0" stop-color="#182a68"/><stop offset=".2" stop-color="#284494"/><stop offset=".5" stop-color="#223c8c"/><stop offset=".8" stop-color="#2a4898"/><stop offset="1" stop-color="#182a66"/></linearGradient></defs>
<g filter="url(#soft)">
<path d="M56.500 64L73 62L90 64L92 90L86 168H62L55 90Z" fill="#161e70"/>
<path d="M62 120H86L85 168H63Z" fill="#101660"/>
<circle cx="72" cy="99" r=".9" fill="#0a0e40"/><circle cx="73" cy="122" r="1.300" fill="#7880b0"/><circle cx="73" cy="144" r=".9" fill="#0a0e40"/>
<path d="M58 74.500L71 78.500V82.500L58.500 87Q56.500 81 58 74.500ZM88 74L75 78.500V82.500L87.500 86.500Q89.500 80 88 74Z" fill="#4a4262"/>
<path d="M60 77L68 80M86 77L78 80M61 83L68 81.500M85 83L78 81.500" stroke="#9a8098" stroke-width="1.200" fill="none"/>
<rect x="70.500" y="77.500" width="5" height="6" rx="1" fill="#5a5274"/>
<path d="M51.800 32C50.300 32 50.300 38 51.800 42C52.800 45 54.500 45 55.500 44L55.500 32ZM96.300 32C97.800 32 97.800 38 96.300 42C95.300 45 93.500 45 92.500 44L92.500 32Z" fill="#e0a888"/>
<path d="M55.500 36C55.500 26 57 21 60 19L88 19C91.500 22 93.300 27 93.300 36C93.300 46 91 55 87.800 60.400C83 67 78 70 73.700 70C70 70 64.500 67 59.500 60.400C57 55 55.500 46 55.500 36Z" fill="url(#s6)"/>
<path d="M57.500 48C59.500 58 64 66.500 73.700 70C84 66.500 88 58 90.500 48C89 55 85 59.500 81 59.500L79.500 54Q73.700 51.500 68 54L66.500 59.500C62.500 59.500 59.500 55 57.500 48Z" fill="#7a5438" opacity=".3"/>
<path d="M52.400 15C53 8 62 2 72.900 1.400C80 1 86 4 90.200 8.400C94 12 95 16 94.300 21C94 26 93.500 30 92.800 34C92 28 91.500 25 90 22.600C82 22 76 21 68 21C63 21 59 21.500 56.300 23C55.500 27 55.500 30 55 34C53 28 52 20 52.400 15Z" fill="#5c3a20"/>
<path d="M56 13C62 5 74 2 86 7C78 6 68 8 60 14C68 10 80 8 90 13C80 11 70 13 62 17Z" fill="#9c6c44" opacity=".85"/>
<path d="M59 33Q63.500 31 68 33.200M78 33.200Q82.500 31 87 33" stroke="#3e2616" stroke-width="1.700" fill="none"/>
<ellipse cx="63.600" cy="36.900" rx="2.800" ry="1.400" fill="#2a2020"/><ellipse cx="81.700" cy="36.900" rx="2.800" ry="1.400" fill="#2a2020"/>
<path d="M72.500 39L71 47.500Q73.700 49.500 77 47.500" stroke="#c08c68" stroke-width="1.100" fill="none"/>
<path d="M66.500 52.600Q73.700 50.300 81 52.600L80 54Q73.700 52.600 67.500 54Z" fill="#7a5030" opacity=".75"/>
<path d="M68.500 55.500Q73.700 54.500 79 55.500Q73.700 58.500 68.500 55.500Z" fill="#c47c70"/>
<path d="M55.500 68L42.900 80.900L17.700 86.400C13 92 11.800 100 11.400 109L8.300 156.500V168H135L134.300 150L132.700 109C132 98 130 92 126.400 86.400L102.800 80.900L90.200 68L92 92L84.500 168H64L54 92Z" fill="url(#j6)"/>
<path d="M55.500 68L42.900 80.900L50 92L63 150L65.500 168H68L62 120L56 90ZM90.200 68L102.800 80.900L95.500 92L84.500 150L83 168H80.500L86 120L91 90Z" fill="#2c529c"/>
<path d="M55.500 68L56 90L62 120L68 168H70L64 120L58 88ZM90.200 68L91 90L86 120L80.500 168H78.500L84 120L89.500 88Z" fill="#1c3a78" opacity=".7"/>
<rect x="95.700" y="117.100" width="19" height="3" fill="#4a78c0"/>
<path d="M25.600 150L30.300 168M119.300 153L120 168" stroke="#c8ccd8" stroke-width="1.200" fill="none"/>
</g></svg><div class="t">Kostum meshkujsh blu</div><div class="p">15.00 USD<br>5.000 njësi</div></div>
<div class="selbox" style="left:8px;top:805px;width:414px;height:176px"></div>
<!--/PRODS-->
<!--VBTNS-->
<div class="vbtn" style="left:3px"><svg width="32" height="32" viewBox="0 0 32 32" style="position:absolute;left:6px;top:2px"><rect x="3.500" y="3.500" width="27" height="26" fill="#fff" stroke="#5a8ad0"/><rect x="4" y="4" width="26" height="6" fill="#5a90d8"/><path d="M4 15H30M4 20H30M4 25H30M12.500 10V29M21.500 10V29" stroke="#8cb0e0" stroke-width="1"/></svg></div>
<div class="vbtn" style="left:54px"><svg width="32" height="32" viewBox="0 0 32 32" style="position:absolute;left:6.500px;top:2.500px"><g fill="#8cc0ec" stroke="#4a80c8" stroke-width="1"><rect x="2.500" y="4.500" width="12" height="6"/><rect x="17.500" y="4.500" width="12" height="6"/><rect x="2.500" y="13.500" width="12" height="6"/><rect x="17.500" y="13.500" width="12" height="6"/><rect x="2.500" y="22.500" width="12" height="6"/><rect x="17.500" y="22.500" width="12" height="6"/></g></svg></div>
<!--/VBTNS-->
<div id="split" class="abs" style="left:887px;top:532px;width:1px;height:16px"><i style="position:absolute;left:0;top:0px;width:1px;height:1px;background:#666"></i><i style="position:absolute;left:0;top:2px;width:1px;height:1px;background:#666"></i><i style="position:absolute;left:0;top:4px;width:1px;height:1px;background:#666"></i><i style="position:absolute;left:0;top:6px;width:1px;height:1px;background:#666"></i><i style="position:absolute;left:0;top:8px;width:1px;height:1px;background:#666"></i><i style="position:absolute;left:0;top:10px;width:1px;height:1px;background:#666"></i><i style="position:absolute;left:0;top:12px;width:1px;height:1px;background:#666"></i><i style="position:absolute;left:0;top:14px;width:1px;height:1px;background:#666"></i></div>
<!-- RIGHT -->
<div id="rbox" class="abs"></div>
<div id="rhead" class="abs">Shitje</div>
<!--RIGHTCONTENT-->
<svg class="abs" style="left:1886px;top:11px" width="22" height="22" viewBox="0 0 22 22"><path d="M2 2L20 20M20 2L2 20" stroke="#fff" stroke-width="4.6" stroke-linecap="square"/><path d="M2 2L20 20M20 2L2 20" stroke="#0c0c1c" stroke-width="2.6" stroke-linecap="square"/></svg>
<div class="lbl" style="left:897px;top:55px">Shitës</div>
<div class="lbl" style="left:897px;top:86px">Klient (F10)</div>
<div class="abs" id="lock" style="left:988px;top:43px;width:35px;height:35px;border:1px solid #d2d2d2;border-radius:3px;background:linear-gradient(#f6f6f6,#e4e4e4)">
<svg width="33" height="33" viewBox="0 0 33 33" style="position:absolute;left:0;top:0">
<defs><linearGradient id="lk" x1="0" y1="0" x2="0" y2="1"><stop offset="0" stop-color="#ffe07a"/><stop offset=".5" stop-color="#f0b030"/><stop offset="1" stop-color="#d89018"/></linearGradient></defs>
<path d="M8.5 15V10.5a8 8 0 0 1 16 0V15" fill="none" stroke="#6e747c" stroke-width="3.6"/>
<path d="M8.5 15V10.5a8 8 0 0 1 16 0V15" fill="none" stroke="#c4c8cc" stroke-width="1.4"/>
<rect x="4.5" y="14.5" width="24" height="15" rx="1.5" fill="url(#lk)" stroke="#a86410"/>
<circle cx="16.5" cy="20" r="2" fill="#222"/><path d="M15.5 20h2l.8 6h-3.6z" fill="#222"/>
</svg></div>
<div class="inp dis" style="left:1024px;top:46px;width:446px">Punonjësi numër 2<i class="arr"></i></div>
<div class="inp dis" style="left:1472px;top:46px;width:446px">Emri ligjor<i class="arr"></i></div>
<div class="inp" style="left:1024px;top:77px;width:446px"></div>
<div class="inp dis" style="left:1472px;top:77px;width:446px">09.12.2022<i class="arr"></i></div>
<div class="abs" id="kl" style="left:898px;top:113px;font-weight:bold;font-size:13px;-webkit-text-stroke:.2px;letter-spacing:.32px;line-height:16px;white-space:nowrap;color:#1e1e28">Klienti i parazgjedhur, Pa zbritje</div>
<div class="bar" style="top:137px">Lista e shitjeve</div>
<div class="lbl" style="left:899px;top:168px">Shuma (F7) dhe barkodi (F8)</div>
<div class="lbl" style="left:1472px;top:168px">Emri i produktit</div>
<div class="inp" style="left:899px;top:182px;width:99px;font-weight:bold;font-size:19px;-webkit-text-stroke:.3px;letter-spacing:1.2px;line-height:27px;padding-left:2px;color:#222">1.000
<i style="position:absolute;right:9px;top:6px;border-left:3px solid transparent;border-right:3px solid transparent;border-bottom:3px solid #555"></i>
<i style="position:absolute;right:9px;top:18px;border-left:3px solid transparent;border-right:3px solid transparent;border-top:3px solid #555"></i></div>
<div class="abs" style="left:1005px;top:187px;font-size:12.5px;line-height:19px;color:#333">X</div>
<div class="inp" id="bc" style="left:1024px;top:182px;width:446px;font-weight:bold;font-size:19px;-webkit-text-stroke:.3px;letter-spacing:1.35px;line-height:27px;padding-left:2px;color:#222">0000000000000</div>
<div class="inp" style="left:1472px;top:182px;width:446px"></div>
<!-- grid -->
<div class="gh" style="left:895px;width:12px;border-left:1px solid #c4c4c4;padding:0"></div>
<div class="gh" style="left:907px;width:461px">Emrin</div>
<div class="gh" style="left:1368px;width:140px">Zbritje</div>
<div class="gh" style="left:1508px;width:137px">Çmimi</div>
<div class="gh" style="left:1645px;width:99px">Shuma</div>
<div class="gh" style="left:1744px;width:175px">Shuma</div>
<div class="row blue" style="top:260px"><i class="ind"></i><span id="r1" style="left:14px">1. Fustan i verdhë, 10005, njësi</span><span class="r" style="right:412px">0.00</span><span class="r" style="right:275px">9.50</span><span class="r" style="right:176px">1.000</span><span class="r" style="right:2px">9.50</span></div>
<div class="row green" style="top:307px"><i class="ind"></i><span id="r2" style="left:14px">2. Kostum i gjelbër për burra, 10003, njësi</span><span class="r" style="right:412px">0.00</span><span class="r" style="right:275px">15.00</span><span class="r" style="right:176px">1.000</span><span class="r" style="right:2px">15.00</span></div>
<div class="row blue" style="top:354px"><i class="ind"></i><span style="left:14px">3. Fustan rozë, 10006, njësi</span><span class="r" style="right:412px">0.00</span><span class="r" style="right:275px">9.00</span><span class="r" style="right:176px">1.000</span><span class="r" style="right:2px">9.00</span></div>
<div class="row green" style="top:401px"><i class="ind"><b style="position:absolute;left:4px;top:20px;border-top:3px solid transparent;border-bottom:3px solid transparent;border-left:4px solid #444"></b></i><span style="left:14px">4. Kostum i zi për meshkuj, 10001, njësi</span><span class="r" style="right:412px">0.00</span><span class="r" style="right:275px">15.00</span><span class="r" style="right:176px">1.000</span><span class="r" style="right:2px">15.00</span></div>
<div class="abs" style="left:1918px;top:213px;width:1px;height:680px;background:#c8c8c8"></div>
<!-- totals -->
<div class="abs" style="left:895px;top:892px;width:1025px;height:43px;background:#f5f5f5;border-top:1px solid #d0d0d0"></div>
<div class="tot" style="left:909px;width:457px;padding-left:5px">48.50</div>
<div class="tot" style="left:1370px;width:136px;text-align:right;padding-right:5px">0</div>
<div class="tot" style="left:1647px;width:95px;text-align:right;padding-right:5px">4</div>
<div class="bar" style="top:935px">Pagesa</div>
<div class="lbl" style="left:896px;top:966px">Kontrolli i printimit (F11)</div>
<div class="lbl" style="left:1152px;top:966px">Lloji i pageses (F12)</div>
<div class="lbl" style="left:1408px;top:966px">Shuma nga klienti (F9)</div>
<div class="lbl" style="left:1664px;top:966px">Para të çuditshme</div>
<div class="inp" style="left:896px;top:980px;width:248px;font-weight:bold;font-size:13px;letter-spacing:.35px;line-height:28px;padding-left:2px;color:#222">Pa kontroll (F11)<i class="arr" style="border-top-color:#555;right:10px"></i></div>
<div class="inp" style="left:1152px;top:980px;width:248px;font-weight:bold;font-size:13px;letter-spacing:.42px;line-height:28px;padding-left:2px;color:#222">Para në dorë<i class="arr" style="border-top-color:#555;right:10px"></i></div>
<div class="inp" style="left:1408px;top:980px;width:248px;background:#3aaa35;border-color:#2a8a28;font-weight:bold;font-size:19px;-webkit-text-stroke:.3px;letter-spacing:1px;line-height:27px;padding-left:2px;color:#3d4d3d">0.00
<i style="position:absolute;right:9px;top:7px;border-left:3px solid transparent;border-right:3px solid transparent;border-bottom:3px solid #3a6a38"></i>
<i style="position:absolute;right:9px;top:18px;border-left:3px solid transparent;border-right:3px solid transparent;border-top:3px solid #3a6a38"></i></div>
<div class="abs" style="left:1665px;top:979px;font-weight:bold;font-size:19px;-webkit-text-stroke:.3px;letter-spacing:1.2px;line-height:27px;color:#333">-48.50</div>
<div class="big" style="left:895px;background:#a5ec95">Shes</div>
<div class="big" style="left:1151px;background:#ffffa5">Shtyj</div>
<div class="big" style="left:1407px;background:#ffdca0">Pa pagesë</div>
<div class="big" style="left:1663px;background:#ffa0a0">Anulo</div>
<div class="abs" style="left:895px;top:1078px;width:1025px;height:2px;background:#e4e4e4"></div>
<div id="redge" class="abs" style="left:1919px;top:0;width:1px;height:1080px;background:#d4d4d4"></div>
<!--/RIGHTCONTENT-->
</body>
</html>
